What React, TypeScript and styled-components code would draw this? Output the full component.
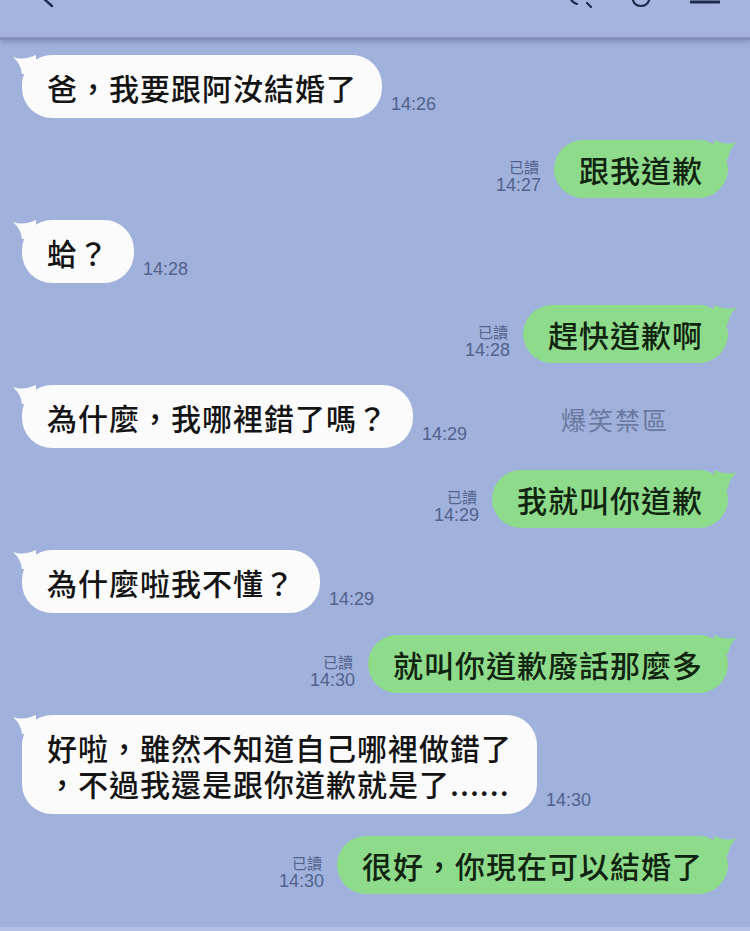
import React from "react"
import styled, { createGlobalStyle } from "styled-components"

type Msg = {
  side: "left" | "right"
  lines: string[]
  time: string
}

const messages: Msg[] = [
  { side: "left", lines: ["爸，我要跟阿汝結婚了"], time: "14:26" },
  { side: "right", lines: ["跟我道歉"], time: "14:27" },
  { side: "left", lines: ["蛤？"], time: "14:28" },
  { side: "right", lines: ["趕快道歉啊"], time: "14:28" },
  { side: "left", lines: ["為什麼，我哪裡錯了嗎？"], time: "14:29" },
  { side: "right", lines: ["我就叫你道歉"], time: "14:29" },
  { side: "left", lines: ["為什麼啦我不懂？"], time: "14:29" },
  { side: "right", lines: ["就叫你道歉廢話那麼多"], time: "14:30" },
  { side: "left", lines: ["好啦，雖然不知道自己哪裡做錯了", "，不過我還是跟你道歉就是了......"], time: "14:30" },
  { side: "right", lines: ["很好，你現在可以結婚了"], time: "14:30" },
]

const CJK = `"Noto Sans CJK TC", "Noto Sans CJK SC", sans-serif`
const WHITE = "#fbfbfc"
const GREEN = "#8fdb8c"

const GlobalStyle = createGlobalStyle`
  html, body {
    margin: 0;
    padding: 0;
    background: #a0b1dc;
  }
`

const Page = styled.div`
  width: 750px;
  height: 931px;
  overflow: hidden;
  background: #a0b1dc;
  display: flex;
  flex-direction: column;
`

const Header = styled.div`
  height: 37px;
  flex: none;
  background: #a4b4de;
  border-bottom: 3px solid #8591bb;
  box-shadow: 0 2px 5px rgba(70, 80, 130, 0.35);
  display: flex;
  align-items: flex-start;
  padding: 0 30px 0 42px;
  position: relative;
  z-index: 1;
`

const HeaderIcons = styled.div`
  margin-left: auto;
  display: flex;
  gap: 38px;
  align-items: flex-start;
`

const Chat = styled.div`
  position: relative;
  flex: 1;
  display: flex;
  flex-direction: column;
  gap: 22px;
  padding: 15px 22px 0 22px;
`

const Row = styled.div<{ $side: "left" | "right" }>`
  display: flex;
  align-items: flex-end;
  justify-content: ${(p) => (p.$side === "left" ? "flex-start" : "flex-end")};
  gap: ${(p) => (p.$side === "left" ? "9px" : "13px")};
`

const Bubble = styled.div<{ $side: "left" | "right" }>`
  position: relative;
  background: ${(p) => (p.$side === "left" ? WHITE : GREEN)};
  color: ${(p) => (p.$side === "left" ? "#141414" : "#10240f")};
  border-radius: 30px;
  padding: ${(p) => (p.$side === "left" ? "13.5px 25px" : "11px 25px")};
  font-family: ${CJK};
  font-size: 30px;
  font-weight: 500;
  line-height: 36px;
  letter-spacing: 1px;
  white-space: nowrap;
`

const Tail = styled.svg<{ $side: "left" | "right" }>`
  position: absolute;
  top: -1px;
  width: 26px;
  height: 22px;
  ${(p) => (p.$side === "left" ? "left: -10px;" : "right: -10px; transform: scaleX(-1);")}
`

const Time = styled.div<{ $flush?: boolean }>`
  font-family: "Liberation Sans", Arial, sans-serif;
  font-size: 18px;
  line-height: 20px;
  color: #52628b;
  margin-bottom: ${(p) => (p.$flush ? "0" : "4px")};
`

const Meta = styled.div`
  display: flex;
  flex-direction: column;
  align-items: flex-end;
  margin-bottom: 3px;
`

const ReadMark = styled.div`
  font-family: ${CJK};
  font-size: 15px;
  line-height: 17px;
  color: #52628b;
  margin-right: 2px;
`

const Watermark = styled.div`
  position: absolute;
  left: 561px;
  top: 361px;
  font-family: ${CJK};
  font-size: 25px;
  letter-spacing: 2px;
  color: #6a79a0;
`

const BottomBar = styled.div`
  height: 4px;
  flex: none;
  background: #b3c0e4;
`

const TailShape = ({ side }: { side: "left" | "right" }) => (
  <Tail $side={side} viewBox="0 0 26 22">
    <path d="M1 3 Q11 7 24 1 L24 20 L10 20 Q9 10 1 3 Z" fill={side === "left" ? WHITE : GREEN} />
  </Tail>
)

export default function App() {
  return (
    <Page>
      <GlobalStyle />
      <Header>
        <svg width="14" height="8" viewBox="0 0 14 8">
          <path d="M1 -2 L10 6" stroke="#1f2b4d" strokeWidth="2.4" strokeLinecap="round" fill="none" />
        </svg>
        <HeaderIcons>
          <svg width="26" height="8" viewBox="0 0 26 8">
            <path d="M4 -6 Q4 2 11 4 M21 3 L25 7" stroke="#1f2b4d" strokeWidth="2.2" strokeLinecap="round" fill="none" />
          </svg>
          <svg width="22" height="8" viewBox="0 0 22 8">
            <path d="M2 -4 Q3 6 11 6 Q19 6 20 -4" stroke="#1f2b4d" strokeWidth="2.2" strokeLinecap="round" fill="none" />
          </svg>
          <svg width="30" height="6" viewBox="0 0 30 6">
            <path d="M1 2 L29 2" stroke="#1f2b4d" strokeWidth="3" strokeLinecap="round" fill="none" />
          </svg>
        </HeaderIcons>
      </Header>
      <Chat>
        {messages.map((m, i) => (
          <Row key={i} $side={m.side}>
            {m.side === "right" && (
              <Meta>
                <ReadMark>已讀</ReadMark>
                <Time $flush>{m.time}</Time>
              </Meta>
            )}
            <Bubble $side={m.side}>
              <TailShape side={m.side} />
              {m.lines.map((l, j) => (
                <div key={j}>{l}</div>
              ))}
            </Bubble>
            {m.side === "left" && <Time>{m.time}</Time>}
          </Row>
        ))}
        <Watermark>爆笑禁區</Watermark>
      </Chat>
      <BottomBar />
    </Page>
  )
}
